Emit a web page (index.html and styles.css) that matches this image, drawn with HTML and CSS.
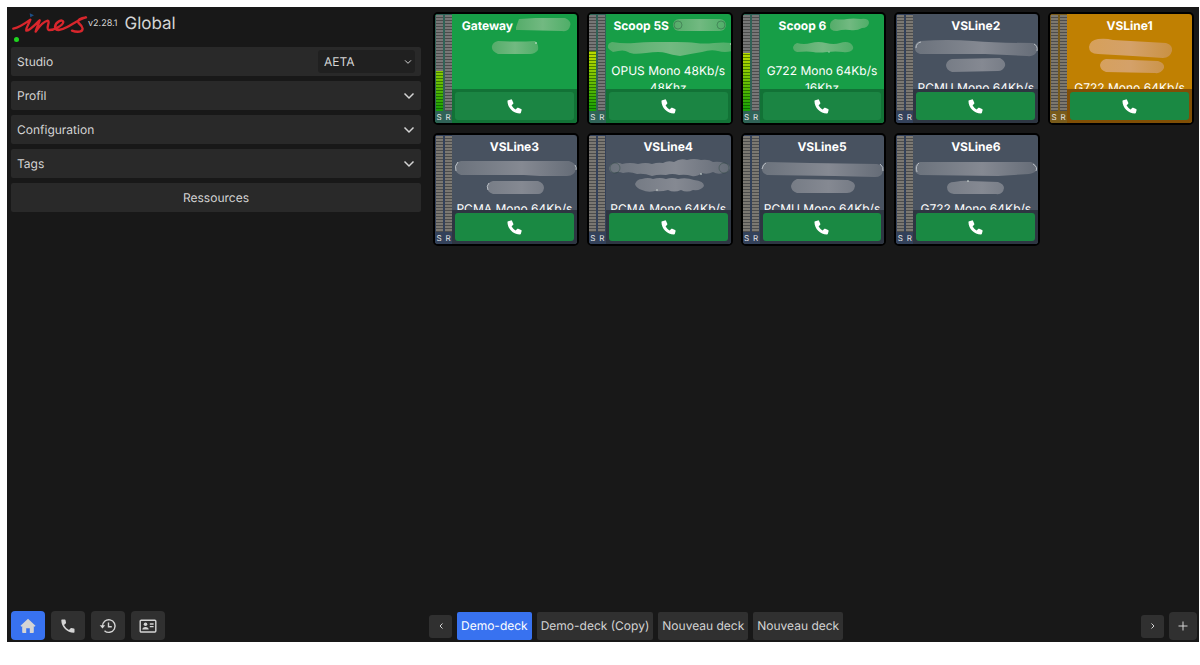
FILE: index.html
```html
<!DOCTYPE html>
<html lang="fr">
<head>
<meta charset="utf-8">
<meta name="viewport" content="width=device-width, initial-scale=1">
<title>Global</title>
<link rel="stylesheet" href="styles.css">
</head>
<body>
<svg class="defs" width="0" height="0" aria-hidden="true">
  <defs>
    <linearGradient id="smear-green" x1="0" x2="1" y1="0" y2="0"><stop offset="0" stop-color="#54ac69"/><stop offset=".5" stop-color="#72b981"/><stop offset="1" stop-color="#4fae68"/></linearGradient>
    <linearGradient id="smear-slate" x1="0" x2="1" y1="0" y2="0"><stop offset="0" stop-color="#6b727c"/><stop offset=".55" stop-color="#858992"/><stop offset="1" stop-color="#656c77"/></linearGradient>
    <linearGradient id="smear-amber" x1="0" x2="1" y1="0" y2="0"><stop offset="0" stop-color="#d6a05a"/><stop offset=".5" stop-color="#d4a169"/><stop offset="1" stop-color="#c99143"/></linearGradient>
    <symbol id="phone" viewBox="0 0 16 16"><path d="M1.300 1.200 4.200.4c.5-.1 1 .1 1.200.6l1.300 3c.2.5.1 1-.3 1.300L4.900 6.600c1 2 2.500 3.500 4.500 4.500l1.300-1.500c.3-.4.8-.5 1.300-.3l3 1.300c.5.2.7.7.6 1.200l-.8 2.900c-.1.5-.5.8-1 .8C6.600 15.500.5 9.400.5 2.200c0-.5.300-.9.800-1z"/></symbol>
    <symbol id="chevron" viewBox="0 0 12 8"><path d="M1.500 1.500 6 6l4.500-4.500" fill="none" stroke="currentColor" stroke-width="1.500"/></symbol>
  </defs>
</svg>
<div class="app">
  <aside class="sidebar">
    <header class="brand">
      <div class="brand-mark">
        <svg class="logo" viewBox="36 38 228 64" role="img" aria-label="ines">
          <path class="logo-dot" d="M89 41 102 47 91 53z"/>
          <path class="logo-line" d="M40 87C56 84 76 71 91 60C87 73 76 87 79 93C90 93 107 73 119 62C115 76 108 88 107 96C118 80 133 65 143 63C152 65 136 87 146 91C162 92 189 77 190 67C188 57 168 65 165 81C164 96 184 92 200 83C220 72 240 57 258 53C242 55 230 61 236 70C250 82 252 93 239 96C230 97 221 95 216 93"/>
        </svg>
        <span class="status"></span>
      </div>
      <span class="version">v2.28.1</span>
      <h1 class="title">Global</h1>
    </header>
    <div class="panels">
      <div class="panel">
        <label for="studio">Studio</label>
        <span class="select-box">
          <select id="studio" class="select"><option>AETA</option></select>
          <svg class="select-arrow" aria-hidden="true"><use href="#chevron"/></svg>
        </span>
      </div>
      <button class="panel" type="button">Profil<svg class="chevron" aria-hidden="true"><use href="#chevron"/></svg></button>
      <button class="panel" type="button">Configuration<svg class="chevron" aria-hidden="true"><use href="#chevron"/></svg></button>
      <button class="panel" type="button">Tags<svg class="chevron" aria-hidden="true"><use href="#chevron"/></svg></button>
      <button class="panel panel-center" type="button">Ressources</button>
    </div>
    <nav class="nav">
      <button class="nav-button active" type="button" aria-label="Accueil"><svg class="nav-icon" viewBox="0 0 16 16"><path fill="currentColor" d="M8 .8 15.500 7.800 14.600 8.800 13.800 8.200V14.200q0 .8-.8.8H9.800V10.200H6.200V15H3q-.8 0-.8-.8V8.200L1.400 8.800.5 7.800z"/></svg></button>
      <button class="nav-button" type="button" aria-label="Appels"><svg class="nav-icon" viewBox="0 0 16 16"><path fill="currentColor" d="M2 1.500H4.800q.6 0 .7.6l.5 2.500q.1.500-.3.800L4 7q1.600 3.300 5 5l1.600-1.700q.4-.4.800-.3l2.500.5q.6.100.6.700V14q0 .7-.7.700Q8.500 14.500 5 11 1.500 7.500 1.300 2.200q0-.7.700-.7z"/></svg></button>
      <button class="nav-button" type="button" aria-label="Historique"><svg class="nav-icon" viewBox="0 0 16 16"><g fill="none" stroke="currentColor" stroke-width="1.400"><path d="M2.500 8.500A6.300 6.300 0 1 1 4.500 12.700M8.500 4.500V8.700H11.800"/></g><path fill="currentColor" d="M-.3 7.300H5.200L2.500 10.500z"/></svg></button>
      <button class="nav-button" type="button" aria-label="Contacts"><svg class="nav-icon nav-icon-wide" viewBox="0 0 18 16"><rect x="1.200" y="2.200" width="15.600" height="11.800" rx="1" fill="none" stroke="currentColor" stroke-width="1.400"/><circle cx="6.500" cy="6.300" r="1.800" fill="currentColor"/><path fill="currentColor" d="M3.300 11.500q.2-2.500 3.200-2.500t3.200 2.500z"/><path stroke="currentColor" stroke-width="1.300" d="M10.800 6H14.600M10.800 8.700H14.600"/></svg></button>
    </nav>
  </aside>

  <main class="deck">
    <div class="cards">
      <article class="card green">
        <div class="meters">
          <div class="meter"><i class="bar"><b class="level" style="height:42%"></b></i>S</div>
          <div class="meter"><i class="bar"></i>R</div>
        </div>
        <div class="info">
          <h2 class="name name-tagged">Gateway <svg class="tag" viewBox="0 0 55 14"><path d="M3 1Q28-1 49 0 56 3 54 8 53 14 46 13L3 12-1 12z"/></svg></h2>
          <svg class="lines one" viewBox="0 0 126 17"><path d="M46 2Q65 3 83 2 87 5 86 11 83 15 78 15L46 15Q39 12 40 7 41 3 46 2"/><circle class="spark" cx="84" cy="4" r=".8"/></svg>
        </div>
        <div class="action"><button class="call" type="button" aria-label="Appeler"><svg class="phone"><use href="#phone"/></svg></button></div>
      </article>
      <article class="card green">
        <div class="meters">
          <div class="meter"><i class="bar"><b class="level" style="height:63%"></b></i>S</div>
          <div class="meter"><i class="bar"></i>R</div>
        </div>
        <div class="info">
          <h2 class="name name-tagged">Scoop 5S <svg class="tag" viewBox="0 0 55 14"><rect x="1" y="1" width="53" height="12" rx="6"/><g class="ring"><circle cx="6" cy="7" r="4"/><circle cx="49" cy="7" r="4"/></g></svg></h2>
          <svg class="lines one" viewBox="0 0 126 17"><path d="M6 3Q18 5 28 4T48 3 70 3 90 4 108 4 126 4V12Q119 14 112 12T96 13Q84 15 74 17 66 16 60 14T40 14 22 13 7 13Q1 10 2 7 2 4 6 3"/><circle class="spark" cx="125" cy="5" r=".8"/></svg>
          <p class="codec">OPUS Mono 48Kb/s 48Khz</p>
        </div>
        <div class="action"><button class="call" type="button" aria-label="Appeler"><svg class="phone"><use href="#phone"/></svg></button></div>
      </article>
      <article class="card green">
        <div class="meters">
          <div class="meter"><i class="bar"><b class="level" style="height:60%"></b></i>S</div>
          <div class="meter"><i class="bar"></i>R</div>
        </div>
        <div class="info">
          <h2 class="name name-tagged">Scoop 6 <svg class="tag tag-short" viewBox="0 0 40 14"><path d="M6 1Q12 2 18 1T32 1Q40 0 40 5 39 10 33 10 28 13 21 12T8 13Q0 13 1 7 1 3 6 1"/></svg></h2>
          <svg class="lines one" viewBox="0 0 126 17"><path d="M37 4Q44 6 51 4T66 4 80 4 90 4Q94 7 93 10 90 14 83 13T67 13 53 13 37 13Q33 12 33 8 34 5 37 4"/><circle class="spark" cx="69" cy="13" r=".6"/></svg>
          <p class="codec">G722 Mono 64Kb/s 16Khz</p>
        </div>
        <div class="action"><button class="call" type="button" aria-label="Appeler"><svg class="phone"><use href="#phone"/></svg></button></div>
      </article>
      <article class="card slate">
        <div class="meters">
          <div class="meter"><i class="bar"></i>S</div>
          <div class="meter"><i class="bar"></i>R</div>
        </div>
        <div class="info">
          <h2 class="name">VSLine2</h2>
          <svg class="lines" viewBox="0 0 126 34"><path d="M7 2Q35 0 60 2T120 4Q126 6 124 12 122 18 114 17L72 15 7 15Q1 13 2 7 3 3 7 2M39 20L87 19Q93 22 92 27 90 32 85 32L39 33Q33 31 33 26 34 21 39 20"/><path class="edge" d="M8 3Q3 4 3 9M121 5Q125 7 124 12"/></svg>
          <p class="codec">PCMU Mono 64Kb/s</p>
        </div>
        <div class="action"><button class="call" type="button" aria-label="Appeler"><svg class="phone"><use href="#phone"/></svg></button></div>
      </article>
      <article class="card amber">
        <div class="meters">
          <div class="meter"><i class="bar"></i>S</div>
          <div class="meter"><i class="bar"></i>R</div>
        </div>
        <div class="info">
          <h2 class="name">VSLine1</h2>
          <svg class="lines" viewBox="0 0 126 34"><path d="M31 0Q39-1 46 1L99 4Q106 6 105 12 103 19 96 19L66 17 31 15Q22 15 22 8 23 1 31 0M39 20L91 22Q98 24 97 29 94 35 88 34L39 33Q33 31 33 26 34 21 39 20"/></svg>
          <p class="codec">G722 Mono 64Kb/s</p>
        </div>
        <div class="action"><button class="call" type="button" aria-label="Appeler"><svg class="phone"><use href="#phone"/></svg></button></div>
      </article>
      <article class="card slate">
        <div class="meters">
          <div class="meter"><i class="bar"></i>S</div>
          <div class="meter"><i class="bar"></i>R</div>
        </div>
        <div class="info">
          <h2 class="name">VSLine3</h2>
          <svg class="lines" viewBox="0 0 126 34"><path d="M9 1L117 1Q124 3 124 8 123 16 115 16L88 16 72 15 9 15Q3 13 3 7 4 2 9 1M41 21L86 21Q92 23 92 28 91 34 86 34L41 34Q35 32 35 27 36 22 41 21"/><path class="edge" d="M6 2Q2 6 4 11M37 23Q34 26 36 30M123 5Q125 8 124 10"/></svg>
          <p class="codec">PCMA Mono 64Kb/s</p>
        </div>
        <div class="action"><button class="call" type="button" aria-label="Appeler"><svg class="phone"><use href="#phone"/></svg></button></div>
      </article>
      <article class="card slate">
        <div class="meters">
          <div class="meter"><i class="bar"></i>S</div>
          <div class="meter"><i class="bar"></i>R</div>
        </div>
        <div class="info">
          <h2 class="name">VSLine4</h2>
          <svg class="lines" viewBox="0 0 126 34"><path d="M8 3Q13 2 16 4 24 2 32 4 40 2 46 4 52 2 57 3 62 0 68 2 74-2 81 0 88-2 95 0 103-1 107 2 113 1 118 3 124 4 124 8 123 13 117 13 112 15 107 12 101 15 96 13 90 17 86 16 80 14 73 15 66 13 60 15 52 14 46 16 38 13 31 14 24 11 17 13 12 11 8 13 3 12 3 8 4 4 8 3M36 19Q42 17 47 19 54 17 60 19 66 17 72 19 80 17 88 20 98 21 98 26 95 31 87 30 81 33 75 30 68 33 62 30 55 32 49 31 42 33 36 30 30 28 29 24 31 19 36 19"/><g class="ring"><circle cx="9" cy="8" r="5"/><circle cx="118" cy="8" r="5"/></g><circle class="spark" cx="95" cy="14" r=".8"/><circle class="spark" cx="51" cy="30" r=".7"/></svg>
          <p class="codec">PCMA Mono 64Kb/s</p>
        </div>
        <div class="action"><button class="call" type="button" aria-label="Appeler"><svg class="phone"><use href="#phone"/></svg></button></div>
      </article>
      <article class="card slate">
        <div class="meters">
          <div class="meter"><i class="bar"></i>S</div>
          <div class="meter"><i class="bar"></i>R</div>
        </div>
        <div class="info">
          <h2 class="name">VSLine5</h2>
          <svg class="lines" viewBox="0 0 126 34"><path d="M7 2L50 3 117 4Q124 5 123 11 122 17 115 17L75 16 7 15Q1 13 2 7 3 3 7 2M37 19L88 20Q95 22 95 26 94 33 87 33L37 33Q31 31 31 26 32 21 37 19"/><path class="edge" d="M120 4Q124 7 123 11M6 3Q3 4 2 9"/></svg>
          <p class="codec">PCMU Mono 64Kb/s</p>
        </div>
        <div class="action"><button class="call" type="button" aria-label="Appeler"><svg class="phone"><use href="#phone"/></svg></button></div>
      </article>
      <article class="card slate">
        <div class="meters">
          <div class="meter"><i class="bar"></i>S</div>
          <div class="meter"><i class="bar"></i>R</div>
        </div>
        <div class="info">
          <h2 class="name">VSLine6</h2>
          <svg class="lines" viewBox="0 0 126 34"><path d="M7 2L118 2Q124 4 124 9 123 13 116 14L85 16 7 15Q1 13 2 7 3 3 7 2M41 22Q52 20 56 21L85 22Q91 24 91 28 90 35 83 34L41 34Q34 33 34 27 35 22 41 22"/><path class="edge" d="M6 3Q2 6 4 12M120 4Q125 7 123 11"/><circle class="spark" cx="55" cy="21" r=".8"/></svg>
          <p class="codec">G722 Mono 64Kb/s</p>
        </div>
        <div class="action"><button class="call" type="button" aria-label="Appeler"><svg class="phone"><use href="#phone"/></svg></button></div>
      </article>
    </div>
    <footer class="tabs">
      <button class="step" type="button" aria-label="Précédent"><svg class="step-icon" viewBox="0 0 8 8"><path d="M5.500 1.500 3 4l2.500 2.500"/></svg></button>
      <button class="tab active" type="button">Demo-deck</button>
      <button class="tab" type="button">Demo-deck (Copy)</button>
      <button class="tab" type="button">Nouveau deck</button>
      <button class="tab" type="button">Nouveau deck</button>
      <span class="spacer"></span>
      <button class="step" type="button" aria-label="Suivant"><svg class="step-icon" viewBox="0 0 8 8"><path d="M2.500 1.500 5 4 2.500 6.500"/></svg></button>
      <button class="add" type="button" aria-label="Ajouter"><svg class="add-icon" viewBox="0 0 10 10"><path d="M5 .5v9M.5 5h9"/></svg></button>
    </footer>
  </main>
</div>
</body>
</html>
```
FILE: styles.css
```css
* { box-sizing: border-box; }

body {
  margin: 0;
  padding: 7px 1px 23px 7px;
  min-height: 100vh;
  display: flex;
  background: #fff;
  color: #d4d4d4;
  font: 12px/16px Inter, "Liberation Sans", sans-serif;
  text-rendering: geometricPrecision;
}

button, select { font: inherit; color: inherit; border: 0; margin: 0; text-rendering: inherit; }
h1, h2, p { margin: 0; }
svg { display: block; }
.defs { position: absolute; }

.app {
  flex: 1;
  display: grid;
  grid-template-columns: minmax(240px, 410px) 1fr;
  gap: 8px;
  padding: 0 2px 2px 4px;
  background: #181818;
}

.sidebar, .deck { display: flex; flex-direction: column; min-width: 0; }

/* Brand */
.brand { display: flex; height: 40px; padding-top: 5px; }
.brand-mark { padding-left: 1px; }
.logo { width: 76px; height: 22px; }
.logo-line { fill: none; stroke: #d8262c; stroke-width: 7; stroke-linecap: round; stroke-linejoin: round; }
.logo-dot { fill: #1d4f86; }
.status { display: block; width: 5px; height: 5px; margin: 3px 0 0 2px; border-radius: 50%; background: #1fd51f; }
.version { font-size: 9px; line-height: 23px; }
.title { margin-left: 7px; font-size: 17px; line-height: 24px; font-weight: 400; }

/* Side panels */
.panels { display: flex; flex-direction: column; gap: 5px; }
.panel {
  display: flex;
  align-items: center;
  justify-content: space-between;
  width: 100%;
  height: 29px;
  padding: 0 6px;
  border-radius: 2px;
  background: #292929;
  text-align: left;
}
.panel-center { justify-content: center; }
.chevron { width: 12px; height: 8px; }
.select-box { position: relative; width: 97px; }
.select {
  display: block;
  width: 100%;
  height: 23px;
  padding: 0 6px;
  appearance: none;
  border-radius: 3px;
  background: #202020;
}
.select-arrow { position: absolute; right: 3px; top: 9px; width: 8px; height: 6px; pointer-events: none; }

/* Navigation */
.nav { display: flex; gap: 6px; margin-top: auto; }
.nav-button {
  display: grid;
  place-items: center;
  width: 34px;
  height: 29px;
  padding: 0;
  border-radius: 4px;
  background: #303030;
}
.nav-icon { width: 16px; height: 16px; overflow: visible; }
.nav-icon-wide { width: 18px; }
.nav-button.active, .tab.active { background: #3872f0; }
.tab.active { color: #fff; }

/* Line cards */
.cards {
  display: grid;
  grid-template-columns: repeat(5, minmax(0, 1fr));
  gap: 8px;
  padding: 5px 3px 0 4px;
}
.card {
  display: grid;
  grid-template: 75px 34px / 17px minmax(0, 1fr);
  border: 2px solid #000;
  border-radius: 5px;
  overflow: hidden;
  color: #fff;
}
.green { background: #179e47; --side: #306257; --dark: #127236; --call: #1b8543; --smear: url(#smear-green); --seg: #777; }
.slate { background: #485260; --side: #33415a; --dark: #2e3642; --call: #1a8943; --smear: url(#smear-slate); --seg: #7b7872; }
.amber { background: #c08002; --side: #785b1b; --dark: #804f05; --call: #1a8943; --smear: url(#smear-amber); --seg: #7d786d; }

.meters {
  grid-row: 1 / 3;
  display: flex;
  justify-content: center;
  gap: 2px;
  padding: 1px 1px 0;
  background: var(--side);
}
.meter {
  display: flex;
  flex-direction: column;
  width: 7px;
  align-items: center;
  color: #e4e4e4;
  font-size: 8px;
  line-height: 13px;
}
.bar {
  display: flex;
  flex: none;
  align-items: flex-end;
  width: 7px;
  height: 96px;
  background: repeating-linear-gradient(var(--seg) 0 2px, #4c4c4c 2px 3px);
}
.level {
  width: 100%;
  background:
    repeating-linear-gradient(to top, transparent 0 2px, rgb(0 50 0 / 50%) 2px 3px),
    linear-gradient(to top, #15a005 0, #b9d900 56px);
}

.info { overflow: hidden; padding-top: 3px; text-align: center; }
.name { display: flex; justify-content: center; gap: 3px; font-size: 12px; line-height: 17px; font-weight: 700; white-space: nowrap; }
.name-tagged { padding-left: 4px; }
.tag { width: 55px; height: 14px; margin-top: 1px; fill: var(--smear); }
.tag-short { width: 40px; }
.lines { width: 126px; height: 34px; margin: 5px auto 6px; fill: var(--smear); overflow: visible; }
.lines.one { height: 17px; }
.spark { fill: #e4eee6; }
.edge { fill: none; stroke: #b9bfc5; stroke-width: 1; }
.ring { fill: none; stroke: rgb(30 60 50 / 35%); stroke-width: 1; }
.codec { line-height: 17px; }

.action { padding: 3px; background: var(--dark); }
.call {
  display: grid;
  place-items: center;
  width: 100%;
  height: 28px;
  padding: 0;
  border-radius: 3px;
  background: var(--call);
  color: #fff;
}
.phone { width: 15px; height: 15px; fill: currentColor; }

/* Deck tabs */
.tabs { display: flex; align-items: center; gap: 5px; margin-top: auto; }
.tab { height: 28px; padding: 0 4px; border-radius: 2px; background: #303030; white-space: nowrap; }
.step { display: grid; place-items: center; width: 23px; height: 23px; padding: 0; border-radius: 3px; background: #303030; }
.step-icon { width: 8px; height: 8px; fill: none; stroke: currentColor; stroke-width: 1; }
.add { display: grid; place-items: center; width: 28px; height: 28px; padding: 0; border-radius: 4px; background: #303030; }
.add-icon { width: 10px; height: 10px; fill: none; stroke: currentColor; stroke-width: 1; }
.spacer { flex: 1; }
```
